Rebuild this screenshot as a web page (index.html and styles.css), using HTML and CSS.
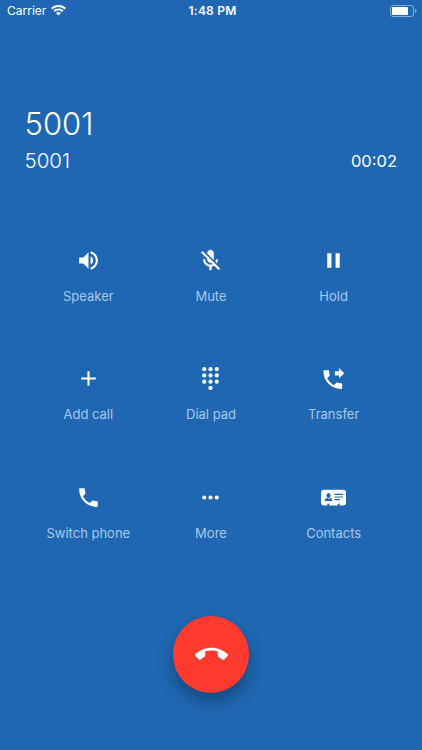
FILE: index.html
```
<!DOCTYPE html>
<html lang="en">
<head>
    <meta charset="UTF-8">
    <meta name="viewport" content="width=device-width, initial-scale=1.0">
    <title>Call</title>
    <link rel="stylesheet" href="styles.css">
</head>
<body>
    <div class="status-bar">
        <div class="carrier">
            <span>Carrier</span>
            <svg class="wifi" viewBox="0 0 15 11">
                <path d="M7.5 0C4.6 0 2 1.1 0 2.9l1.4 1.5C3 2.9 5.1 2 7.5 2s4.5.9 6.1 2.4L15 2.9C13 1.1 10.4 0 7.5 0z"/>
                <path d="M7.5 3.5c-1.9 0-3.7.7-5 1.9l1.4 1.5c1-.9 2.2-1.4 3.6-1.4s2.6.5 3.6 1.4l1.4-1.5c-1.3-1.2-3.1-1.9-5-1.9z"/>
                <path d="M7.5 7c-1 0-1.9.4-2.5 1l2.5 2.6L10 8c-.6-.6-1.5-1-2.5-1z"/>
            </svg>
        </div>
        <div class="clock">1:48 PM</div>
        <svg class="battery" viewBox="0 0 27 12">
            <rect class="battery-case" x="0.5" y="0.5" width="23" height="11" rx="2.5"/>
            <rect x="2" y="2" width="16" height="8" rx="1"/>
            <path class="battery-tip" d="M25 4c1 .3 1.5 1.1 1.5 2s-.5 1.7-1.5 2z"/>
        </svg>
    </div>

    <div class="caller">
        <div class="name">5001</div>
        <div class="details">
            <span class="number">5001</span>
            <span class="duration">00:02</span>
        </div>
    </div>

    <div class="actions">
        <div class="action">
            <svg class="icon" viewBox="0 0 24 24"><path d="M3 9v6h4l5 5V4L7 9H3zm13.5 3c0-1.77-1.02-3.29-2.5-4.03v8.05c1.48-.73 2.5-2.25 2.5-4.02zM14 3.23v2.06c2.89.86 5 3.54 5 6.71s-2.11 5.85-5 6.71v2.06c4.01-.91 7-4.49 7-8.77s-2.99-7.86-7-8.77z"/></svg>
            <span class="label">Speaker</span>
        </div>
        <div class="action">
            <svg class="icon icon-bold" viewBox="0 0 24 24"><path d="M19 11h-1.7c0 .74-.16 1.43-.43 2.05l1.23 1.23c.56-.98.9-2.09.9-3.28zm-4.02.17c0-.06.02-.11.02-.17V5c0-1.66-1.34-3-3-3S9 3.34 9 5v.18l5.98 5.99zM4.27 3L3 4.27l6.01 6.01V11c0 1.66 1.33 3 2.99 3 .22 0 .44-.03.65-.08l1.66 1.66c-.71.33-1.5.52-2.31.52-2.76 0-5.3-2.1-5.3-5.1H5c0 3.41 2.72 6.23 6 6.72V21h2v-3.28c.91-.13 1.77-.45 2.54-.9L19.73 21 21 19.73 4.27 3z"/></svg>
            <span class="label">Mute</span>
        </div>
        <div class="action">
            <svg class="icon" viewBox="0 0 24 24"><path d="M6 19h4V5H6v14zm8-14v14h4V5h-4z"/></svg>
            <span class="label">Hold</span>
        </div>
        <div class="action">
            <svg class="icon" viewBox="0 0 24 24"><path d="M19 13h-6v6h-2v-6H5v-2h6V5h2v6h6v2z"/></svg>
            <span class="label">Add call</span>
        </div>
        <div class="action">
            <svg class="icon" viewBox="0 0 24 24">
                <circle cx="6" cy="3" r="2"/><circle cx="12" cy="3" r="2"/><circle cx="18" cy="3" r="2"/>
                <circle cx="6" cy="9" r="2"/><circle cx="12" cy="9" r="2"/><circle cx="18" cy="9" r="2"/>
                <circle cx="6" cy="15" r="2"/><circle cx="12" cy="15" r="2"/><circle cx="18" cy="15" r="2"/>
                <circle cx="12" cy="21" r="2"/>
            </svg>
            <span class="label">Dial pad</span>
        </div>
        <div class="action">
            <svg class="icon" viewBox="0.7 -1 24 24"><path d="M18 11l5-5-5-5v3h-4v4h4v3zm2 4.5c-1.25 0-2.45-.2-3.57-.57-.35-.11-.74-.03-1.02.24l-2.2 2.2c-2.83-1.44-5.15-3.75-6.59-6.59l2.2-2.21c.28-.26.36-.65.25-1C8.7 6.45 8.5 5.25 8.5 4c0-.55-.45-1-1-1H4c-.55 0-1 .45-1 1 0 9.39 7.61 17 17 17 .55 0 1-.45 1-1v-3.5c0-.55-.45-1-1-1z"/></svg>
            <span class="label">Transfer</span>
        </div>
        <div class="action">
            <svg class="icon" viewBox="0 0 24 24"><path d="M6.62 10.79c1.44 2.83 3.76 5.14 6.59 6.59l2.2-2.2c.27-.27.67-.36 1.02-.24 1.12.37 2.33.57 3.57.57.55 0 1 .45 1 1V20c0 .55-.45 1-1 1-9.39 0-17-7.61-17-17 0-.55.45-1 1-1h3.5c.55 0 1 .45 1 1 0 1.25.2 2.45.57 3.57.11.35.03.74-.25 1.02l-2.2 2.2z"/></svg>
            <span class="label">Switch phone</span>
        </div>
        <div class="action">
            <svg class="icon" viewBox="0 0 24 24"><circle cx="6" cy="12" r="2"/><circle cx="12" cy="12" r="2"/><circle cx="18" cy="12" r="2"/></svg>
            <span class="label">More</span>
        </div>
        <div class="action">
            <svg class="icon" viewBox="0 0 25 25">
                <path d="M3 4.8h19a3 3 0 0 1 3 3v9.7a3 3 0 0 1-3 3h-3.3v-1.8h-2v1.8H8.3v-1.8h-2v1.8H3a3 3 0 0 1-3-3V7.8a3 3 0 0 1 3-3z"/>
                <g class="card-detail">
                    <ellipse cx="7.5" cy="10.5" rx="2.1" ry="2.6"/>
                    <path d="M3.6 16c0-2 1.2-2.7 2.7-3l1.2 1.2L8.7 13c1.5.3 2.7 1 2.7 3z"/>
                    <path d="M13.5 8.8H22V10h-8.5zM13.5 11.4H22v1.2h-8.5zM13.5 14H19v1.2h-5.5z"/>
                </g>
            </svg>
            <span class="label">Contacts</span>
        </div>
    </div>

    <div class="hangup">
        <svg viewBox="0 0 24 24"><path d="M12 9c-1.6 0-3.15.25-4.6.72v3.1c0 .39-.23.74-.56.9-.98.49-1.87 1.12-2.66 1.85-.18.18-.43.28-.7.28-.28 0-.53-.11-.71-.29L.29 13.08c-.18-.17-.29-.42-.29-.7 0-.28.11-.53.29-.71C3.34 8.78 7.46 7 12 7s8.66 1.78 11.71 4.67c.18.18.29.43.29.71 0 .28-.11.53-.29.71l-2.48 2.48c-.18.18-.43.29-.71.29-.27 0-.52-.11-.7-.28-.79-.74-1.69-1.36-2.67-1.85-.33-.16-.56-.5-.56-.9v-3.1C15.15 9.25 13.6 9 12 9z"/></svg>
    </div>
</body>
</html>
```
FILE: styles.css
```
body {
    font-family: 'Inter', 'Liberation Sans', sans-serif;
    background-color: #1f67b2;
    color: #ffffff;
    margin: 0;
    height: 750px;
    overflow: hidden;
}

svg {
    display: block;
    fill: #ffffff;
}

.status-bar {
    display: grid;
    grid-template-columns: 1fr auto 1fr;
    align-items: center;
    height: 21px;
    padding: 0 5px 0 7px;
    font-size: 12px;
}

.carrier {
    display: flex;
    align-items: center;
    gap: 5px;
}

.wifi {
    width: 15px;
    height: 11px;
}

.clock {
    padding-left: 1px;
    font-weight: 600;
    letter-spacing: 0.2px;
}

.battery {
    width: 27px;
    height: 12px;
    justify-self: end;
}

.battery-case {
    fill: none;
    stroke: #ffffff;
    stroke-opacity: 0.45;
}

.battery-tip {
    fill-opacity: 0.45;
}

.caller {
    padding: 83px 25px 0 24.5px;
}

.name {
    font-size: 31px;
    font-weight: 300;
    line-height: 40px;
}

.details {
    display: flex;
    justify-content: space-between;
    align-items: center;
    height: 33px;
}

.number {
    font-size: 20.5px;
    font-weight: 300;
}

.duration {
    font-size: 16.5px;
}

.actions {
    display: grid;
    grid-template-columns: repeat(3, 1fr);
    grid-auto-rows: 118.5px;
    margin: 70.5px 27px 0;
}

.action {
    display: flex;
    flex-direction: column;
    align-items: center;
}

.icon {
    width: 25px;
    height: 25px;
}

.icon-bold {
    stroke: #ffffff;
    stroke-width: 0.4;
}

.label {
    margin-top: 13px;
    font-size: 13px;
    line-height: 20px;
    white-space: nowrap;
    color: #a9c8ec;
}

.card-detail {
    fill: #1f67b2;
}

.hangup {
    display: flex;
    justify-content: center;
    align-items: center;
    width: 76.5px;
    height: 76.5px;
    margin: 13px auto 0;
    border-radius: 50%;
    background-color: #ff3b30;
    box-shadow: 0 8px 16px rgba(0, 0, 0, 0.3);
}

.hangup svg {
    width: 33px;
    height: 33px;
}
```
